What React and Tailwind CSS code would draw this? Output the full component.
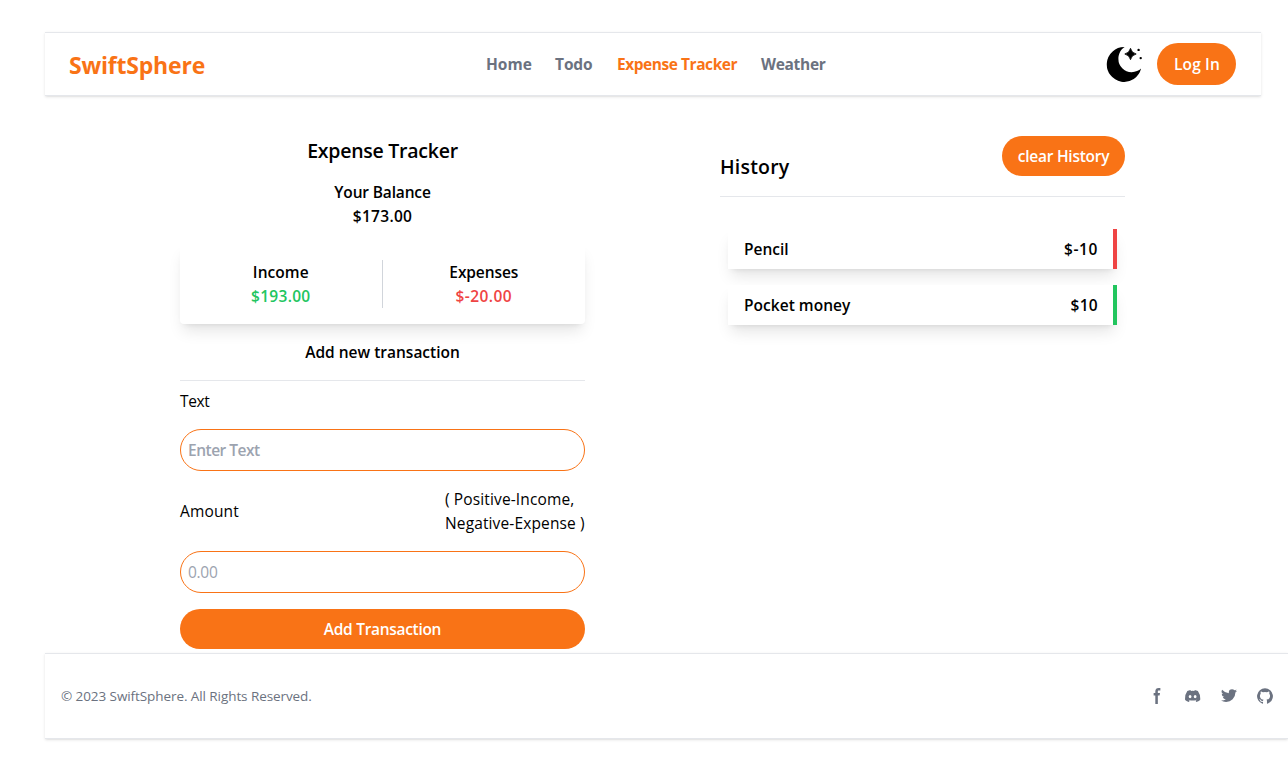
const navItems = [
  { label: "Home", className: "w-[45px] text-[#6b7280] tracking-[0px]" },
  { label: "Todo", className: "w-[38px] text-[#6b7280] tracking-[-0.1px]" },
  { label: "Expense Tracker", className: "w-[120px] text-[#f97316] tracking-[-0.45px]" },
  { label: "Weather", className: "w-[65px] text-[#6b7280] tracking-[-0.3px]" },
];

const transactions = [
  { name: "Pencil", amount: "$-10", border: "border-[#ef4444]", nameClass: "tracking-[0px]", amountClass: "tracking-[0.6px]" },
  { name: "Pocket money", amount: "$10", border: "border-[#22c55e]", nameClass: "tracking-[0.03px]", amountClass: "tracking-[0.3px]" },
];

const socials = [
  {
    name: "Facebook",
    viewBox: "0 0 8 19",
    d: "M6.135 3H8V0H6.135a4.147 4.147 0 0 0-4.142 4.142V6H0v3h2v9.938h3V9h2.021l.592-3H5V3.591A.6.6 0 0 1 5.592 3h.543Z",
  },
  {
    name: "Discord",
    viewBox: "0 0 21 16",
    d: "M16.942 1.556a16.3 16.3 0 0 0-4.126-1.3 12.04 12.04 0 0 0-.529 1.1 15.175 15.175 0 0 0-4.573 0 11.585 11.585 0 0 0-.535-1.1 16.274 16.274 0 0 0-4.129 1.3A17.392 17.392 0 0 0 .182 13.218a15.785 15.785 0 0 0 4.963 2.521c.41-.564.773-1.16 1.084-1.785a10.63 10.63 0 0 1-1.706-.83c.143-.106.283-.217.418-.33a11.664 11.664 0 0 0 10.118 0c.137.113.277.224.418.33-.544.328-1.116.606-1.71.832a12.52 12.52 0 0 0 1.084 1.785 16.46 16.46 0 0 0 5.064-2.595 17.286 17.286 0 0 0-2.973-11.59ZM6.678 10.813a1.941 1.941 0 0 1-1.8-2.045 1.93 1.93 0 0 1 1.8-2.047 1.919 1.919 0 0 1 1.8 2.047 1.93 1.93 0 0 1-1.8 2.045Zm6.644 0a1.94 1.94 0 0 1-1.8-2.045 1.93 1.93 0 0 1 1.8-2.047 1.918 1.918 0 0 1 1.8 2.047 1.93 1.93 0 0 1-1.8 2.045Z",
  },
  {
    name: "Twitter",
    viewBox: "0 0 20 17",
    d: "M20 1.892a8.178 8.178 0 0 1-2.355.635 4.074 4.074 0 0 0 1.8-2.235 8.344 8.344 0 0 1-2.605.98A4.13 4.13 0 0 0 13.85 0a4.068 4.068 0 0 0-4.1 4.038 4 4 0 0 0 .105.919A11.705 11.705 0 0 1 1.4.734a4.006 4.006 0 0 0 1.268 5.392 4.165 4.165 0 0 1-1.859-.5v.05A4.057 4.057 0 0 0 4.1 9.635a4.19 4.19 0 0 1-1.856.07 4.108 4.108 0 0 0 3.831 2.807A8.36 8.36 0 0 1 0 14.184 11.732 11.732 0 0 0 6.291 16 11.502 11.502 0 0 0 17.964 4.5c0-.177 0-.35-.012-.523A8.143 8.143 0 0 0 20 1.892Z",
  },
  {
    name: "GitHub",
    viewBox: "0 0 20 20",
    d: "M10 .333A9.911 9.911 0 0 0 6.866 19.65c.5.092.678-.215.678-.477 0-.237-.01-1.017-.014-1.845-2.757.6-3.338-1.169-3.338-1.169a2.627 2.627 0 0 0-1.1-1.451c-.9-.615.07-.6.07-.6a2.084 2.084 0 0 1 1.518 1.021 2.11 2.11 0 0 0 2.884.823c.044-.503.268-.973.63-1.325-2.2-.25-4.516-1.1-4.516-4.9A3.832 3.832 0 0 1 4.7 7.068a3.56 3.56 0 0 1 .095-2.623s.832-.266 2.726 1.016a9.409 9.409 0 0 1 4.962 0c1.89-1.282 2.717-1.016 2.717-1.016.366.83.402 1.768.1 2.623a3.827 3.827 0 0 1 1.02 2.659c0 3.807-2.319 4.644-4.525 4.889a2.366 2.366 0 0 1 .673 1.834c0 1.326-.012 2.394-.012 2.72 0 .263.18.572.681.475A9.911 9.911 0 0 0 10 .333Z",
  },
];

function MoonIcon() {
  return (
    <svg className="h-9 w-9" viewBox="0 0 36 36" fill="currentColor" aria-hidden="true">
      <path d="M18.6 1.1A17.4 17.4 0 1 0 35.1 22.6C33 24.6 29.5 26.2 25.6 26.2A13.2 13.2 0 0 1 12.4 13C12.4 7.800 15 3.300 18.600 1.100Z" />
      <path d="M24.500 2.300Q25.500 7 30.200 8Q25.500 9 24.500 13.700Q23.500 9 18.800 8Q23.500 7 24.500 2.300Z" stroke="currentColor" strokeWidth="0.8" />
      <circle cx="32.600" cy="3.900" r="1.200" />
      <circle cx="34.700" cy="12.100" r="1.200" />
    </svg>
  );
}

function Header() {
  return (
    <header className="ml-[45px] mr-[27px] grid h-16 grid-cols-[1fr_auto_1fr] items-center border-y border-[#e5e7eb] pl-6 pr-[25px] shadow-sm">
      <a className="pt-0.5 text-[23px] leading-8 font-bold tracking-[-0.2px] text-[#f97316]">SwiftSphere</a>
      <nav className="ml-[7px] flex gap-6">
        {navItems.map((item) => (
          <a key={item.label} className={`font-bold whitespace-nowrap ${item.className}`}>
            {item.label}
          </a>
        ))}
      </nav>
      <div className="flex items-center justify-end gap-[15.5px]">
        <MoonIcon />
        <button className="h-[42px] w-[79px] rounded-[21px] bg-[#f97316] pl-px font-semibold tracking-[0.15px] text-white">Log In</button>
      </div>
    </header>
  );
}

function Tracker() {
  return (
    <section className="w-[405px] pt-[41px]">
      <h2 className="text-center text-[19.5px] leading-7 font-semibold tracking-[-0.25px]">Expense Tracker</h2>
      <div className="mt-[15px] text-center font-semibold">
        <p className="tracking-[-0.15px]">Your Balance</p>
        <p className="tracking-[0.3px]">$173.00</p>
      </div>
      <div className="mt-4 flex rounded bg-white py-4 text-center font-semibold shadow-lg">
        <div className="w-1/2 border-r border-[#d1d5db]">
          <p className="tracking-[0.05px]">Income</p>
          <p className="tracking-[0.3px] text-[#22c55e]">$193.00</p>
        </div>
        <div className="w-1/2">
          <p className="tracking-[-0.1px]">Expenses</p>
          <p className="tracking-[0.4px] text-[#ef4444]">$-20.00</p>
        </div>
      </div>
      <h3 className="mt-4 border-b border-[#e5e7eb] pb-4 text-center font-semibold">Add new transaction</h3>
      <form className="flex flex-col">
        <label className="mt-2 font-medium tracking-[-0.4px]">Text</label>
        <input
          type="text"
          placeholder="Enter Text"
          className="mt-4 h-[42px] w-full rounded-[21px] border border-[#f97316] pr-2 pl-[7px] font-semibold tracking-[-0.5px] placeholder:text-[#9ca3af]"
        />
        <div className="mt-4 flex items-center justify-between font-medium">
          <label className="tracking-[0.15px]">Amount</label>
          <p className="w-[140px] whitespace-nowrap tracking-[0.13px]">
            ( Positive-Income,
            <br />
            Negative-Expense )
          </p>
        </div>
        <input
          type="text"
          placeholder="0.00"
          className="mt-4 h-[42px] w-full rounded-[21px] border border-[#f97316] pr-2 pl-[7px] tracking-[-0.3px] placeholder:text-[#9ca3af]"
        />
        <button type="button" className="mt-4 h-10 rounded-[20px] bg-[#f97316] font-semibold tracking-[-0.3px] text-white">
          Add Transaction
        </button>
      </form>
    </section>
  );
}

function History() {
  return (
    <section className="w-[405px] pt-10">
      <div className="flex h-[61px] justify-between border-b border-[#e5e7eb]">
        <h2 className="pt-[17px] text-[19.5px] leading-7 font-semibold tracking-[0.2px]">History</h2>
        <button className="h-10 w-[123px] rounded-[20px] bg-[#f97316] font-semibold tracking-[-0.25px] whitespace-nowrap text-white">
          clear History
        </button>
      </div>
      <ul className="mt-8 flex flex-col gap-4 px-2">
        {transactions.map((t) => (
          <li key={t.name} className={`flex h-10 items-center justify-between border-r-4 bg-white pr-[15px] pl-4 font-semibold shadow-lg ${t.border}`}>
            <span className={t.nameClass}>{t.name}</span>
            <span className={t.amountClass}>{t.amount}</span>
          </li>
        ))}
      </ul>
    </section>
  );
}

function Footer() {
  return (
    <footer className="mt-1 ml-[45px] flex h-[86px] items-center justify-between border-y border-[#e5e7eb] pr-[15px] pl-4 shadow-sm">
      <span className="text-[13.5px] leading-5 tracking-[-0.08px] text-[#6b7280]">© 2023 SwiftSphere. All Rights Reserved.</span>
      <div className="flex gap-5 text-[#6b7280]">
        {socials.map((s) => (
          <svg key={s.name} className="h-4 w-4" viewBox={s.viewBox} fill="currentColor" role="img" aria-label={s.name}>
            <path fillRule="evenodd" clipRule="evenodd" d={s.d} />
          </svg>
        ))}
      </div>
    </footer>
  );
}

export default function App() {
  return (
    <div className="min-h-screen overflow-hidden bg-white pt-8 font-['Open_Sans','Noto_Sans',sans-serif] text-[15.5px] leading-6 text-black">
      <Header />
      <main className="flex gap-[135px] pl-[180px]">
        <Tracker />
        <History />
      </main>
      <Footer />
    </div>
  );
}
